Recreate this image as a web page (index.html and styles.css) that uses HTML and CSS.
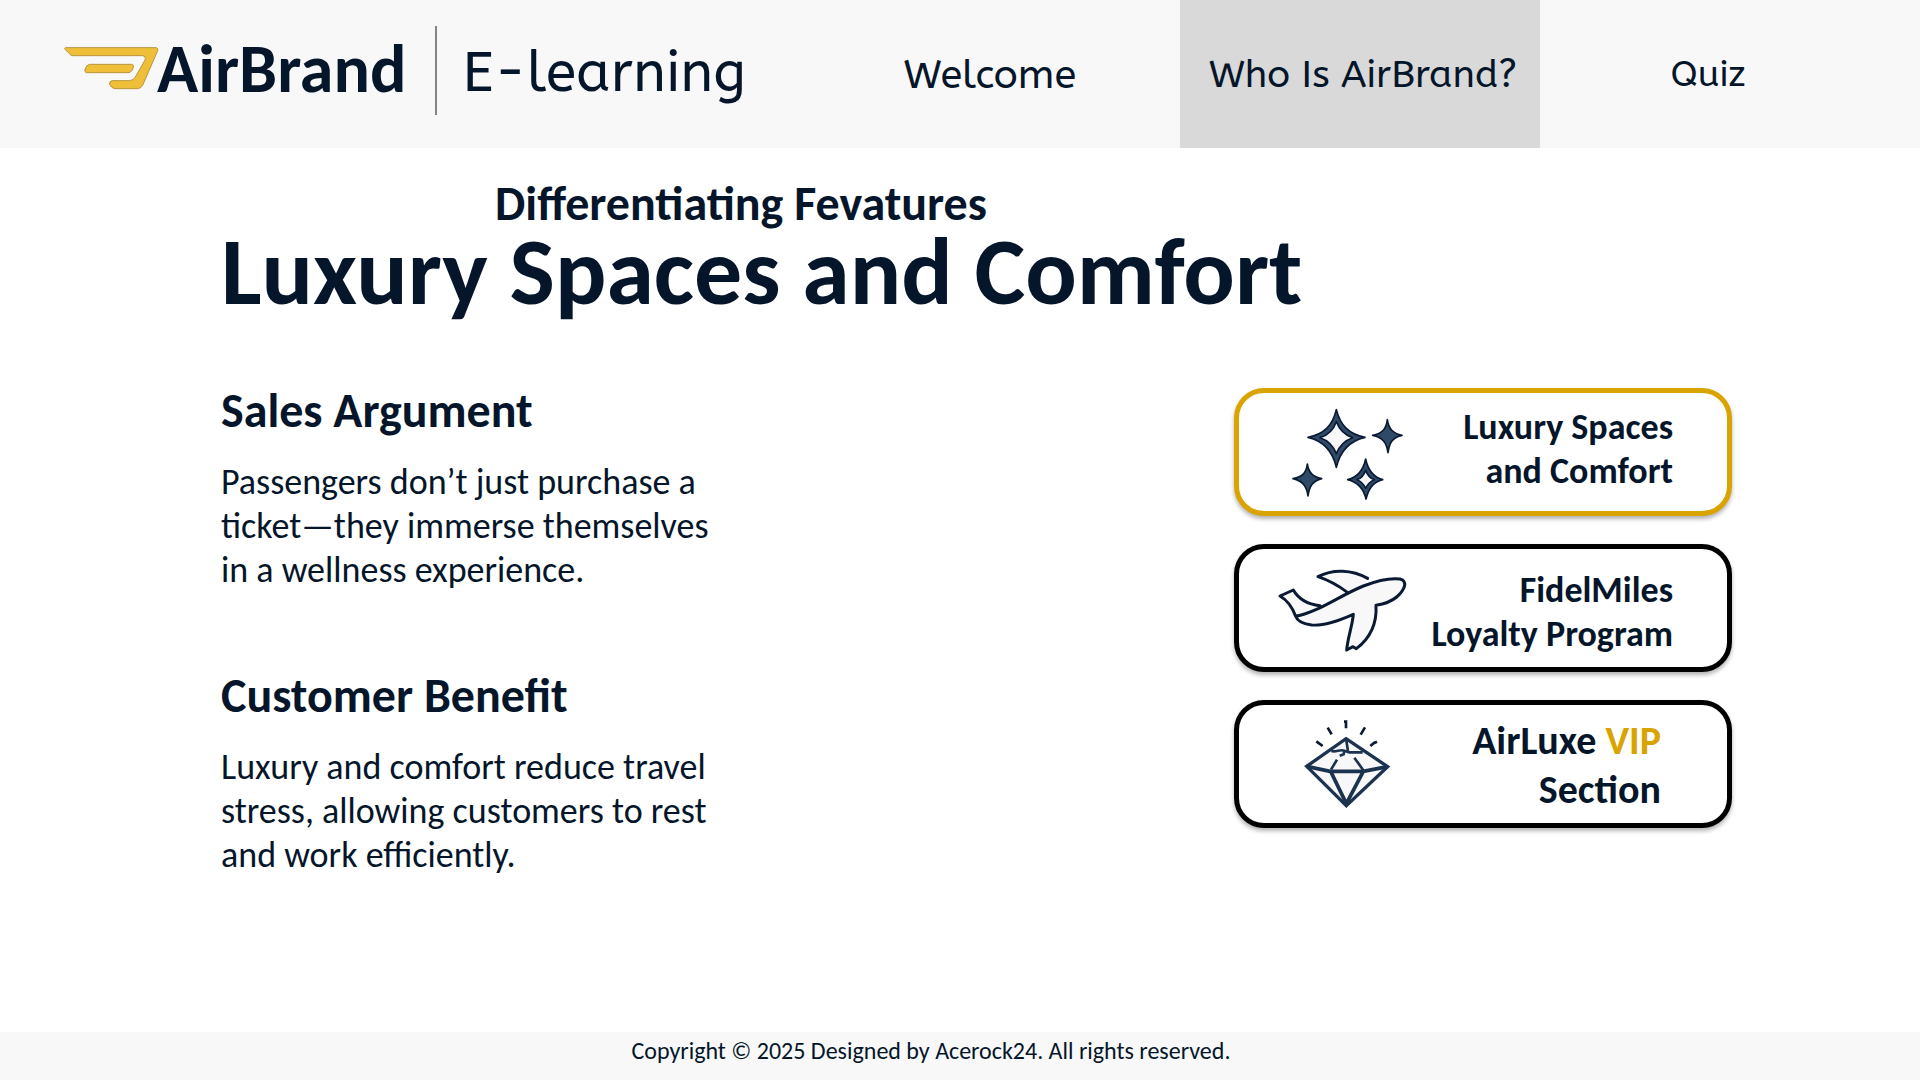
FILE: index.html
```html
<!DOCTYPE html>
<html lang="en">
<head>
<meta charset="utf-8">
<meta name="viewport" content="width=device-width, initial-scale=1">
<title>AirBrand E-learning</title>
<link rel="stylesheet" href="styles.css">
</head>
<body>
<header class="site-header">
  <div class="brand">
    <svg class="wing" viewBox="72 141 285 129" aria-hidden="true">
      <g fill="#efbf3a" stroke="#b8963c" stroke-width="3" stroke-linejoin="round">
        <path d="M76 143H350Q355 145 353 152L308 256Q303 265 293 266H225Q215 265 209 254Q207 243 216 242H268Q281 241 286 231L315 180Q319 168 307 167H97Q92 166 87 160L75 148Q73 144 76 143Z"/>
        <path d="M149 193H275Q282 194 280 202Q276 218 264 218H139Q133 216 135 209Q139 194 149 193Z"/>
      </g>
    </svg>
    <span class="brand-name">AirBrand</span>
    <span class="brand-section">E-learning</span>
  </div>
  <nav class="site-nav">
    <a href="#welcome">Welcome</a>
    <a href="#about" class="active" aria-current="page">Who Is AirBrand?</a>
    <a href="#quiz" class="compact">Quiz</a>
  </nav>
</header>

<main class="content">
  <div class="hero">
    <p class="eyebrow">Differentiating Fevatures</p>
    <h1>Luxury Spaces and Comfort</h1>
  </div>
  <div class="columns">
    <div class="copy">
      <section>
        <h2>Sales Argument</h2>
        <p>Passengers don’t just purchase a ticket—they immerse themselves in a wellness experience.</p>
      </section>
      <section>
        <h2>Customer Benefit</h2>
        <p>Luxury and comfort reduce travel stress, allowing customers to rest and work efficiently.</p>
      </section>
    </div>
    <div class="cards">
      <button type="button" class="card selected">
        <svg class="card-icon" viewBox="57 54 540 354" aria-hidden="true">
          <g fill="#2e4a66" stroke="#0b1a33" stroke-width="5" stroke-linejoin="round">
            <path d="M349 104C361 151 386 177 435 187C388 198 360 229 349 277C338 229 312 198 264 187C313 177 338 151 349 104Z"/>
            <path d="M502 134C506 162 519 175 546 181C518 187 508 203 504 233C500 203 488 187 458 181C487 175 499 162 502 134Z"/>
            <path d="M262 267C266 293 278 305 305 311C278 318 268 333 264 363C260 333 248 318 219 311C248 305 259 293 262 267Z"/>
            <path d="M437 252C444 286 459 306 488 314C458 322 446 341 438 372C431 341 414 322 383 314C415 306 430 286 437 252Z"/>
          </g>
          <g fill="#f8f8f8" stroke="#0b1a33" stroke-width="5" stroke-linejoin="round">
            <path d="M349 140C359 166 376 181 398 188C375 196 358 212 349 236C340 212 324 196 300 188C323 181 340 166 349 140Z"/>
            <path d="M437 286C443 302 450 310 463 314C450 319 443 327 437 340C431 327 424 319 411 314C424 310 431 302 437 286Z"/>
          </g>
        </svg>
        <span class="card-label">Luxury Spaces<br>and Comfort</span>
      </button>
      <button type="button" class="card">
        <svg class="card-icon" viewBox="57 39 540 354" aria-hidden="true">
          <path fill="#f8f8f8" d="M180 180L220 162Q243 204 303 210L383 170L294 122Q365 90 445 127L430 150Q500 123 545 129Q565 140 545 173Q520 203 468 208Q470 285 409 338L380 336L400 236Q260 295 227 241Q215 205 180 180Z"/>
          <g fill="none" stroke="#0b1a33" stroke-width="9" stroke-linejoin="round" stroke-linecap="round">
            <path d="M227 241C295 228 353 182 430 150C476 132 510 125 540 129C565 135 554 162 530 183C511 199 492 204 468 208C471 260 451 306 409 338L399 332L380 342C383 305 397 270 400 235C350 257 309 270 275 267C249 264 232 255 227 241C218 216 206 195 180 180L220 162C235 188 262 205 300 209"/>
            <path d="M382 169C354 148 327 133 294 122C340 98 396 101 443 127"/>
          </g>
        </svg>
        <span class="card-label low">FidelMiles<br>Loyalty Program</span>
      </button>
      <button type="button" class="card">
        <svg class="card-icon" viewBox="57 42 540 354" aria-hidden="true">
          <path fill="#f8f8f8" d="M378 142L504 227L379 346L258 226Z"/>
          <g fill="none" stroke="#1c3350" stroke-width="10">
            <path d="M378 143L503 227L379 344L260 226Z"/>
            <path d="M260 226L330 241H430L503 227M332 241L379 338L430 241" stroke-width="11"/>
            <path d="M333 236L351 206M430 238L403 200M334 180C350 185 357 174 373 179L388 184L428 184M378 143L384 180M359 194L371 190L373 179" stroke-width="8"/>
          </g>
          <g fill="none" stroke="#0b1a33" stroke-width="8">
            <path d="M289 151L308 165M323 110L335 130M372 92H378V112M435 109L422 131M471 152L462 156L451 165"/>
          </g>
        </svg>
        <span class="card-label large">AirLuxe <em>VIP</em><br>Section</span>
      </button>
    </div>
  </div>
</main>

<footer class="site-footer">Copyright © 2025 Designed by Acerock24. All rights reserved.</footer>
</body>
</html>
```
FILE: styles.css
```css
* {
  box-sizing: border-box;
}

body {
  margin: 0;
  min-height: 100vh;
  display: flex;
  flex-direction: column;
  background: #fff;
  color: #05162b;
  font-family: Carlito, Calibri, Lato, sans-serif;
}

h1,
h2,
p {
  margin: 0;
}

.site-header {
  display: flex;
  align-items: stretch;
  min-height: 148px;
  background: #f8f8f8;
}

.brand {
  display: flex;
  align-items: center;
  flex: 0 0 800px;
  padding-left: 64px;
}

.wing {
  width: 95px;
  height: 43px;
  margin: 0 -2px 12px 0;
}

.brand-name {
  margin-bottom: 10px;
  font-size: 68px;
  line-height: 88px;
  font-weight: 700;
}

.brand-section {
  margin: 0 0 7px 29px;
  padding: 5px 0 0 25px;
  border-left: 2px solid #848484;
  font-family: ABeeZee, "Noto Sans", sans-serif;
  font-size: 56px;
  line-height: 84px;
}

.site-nav {
  flex: 1;
  display: grid;
  grid-template-columns: 380fr 360fr 336fr;
  padding-right: 44px;
}

.site-nav a {
  display: flex;
  align-items: center;
  justify-content: center;
  color: inherit;
  font-family: ABeeZee, "Noto Sans", sans-serif;
  font-size: 40px;
  text-decoration: none;
  white-space: nowrap;
}

.site-nav .active {
  padding-left: 6px;
  background: #d9d9d9;
  font-size: 38px;
}

.site-nav .compact {
  font-size: 36px;
}

.content {
  flex: 1;
  padding: 32px 188px 59px 221px;
}

.eyebrow {
  max-width: 1040px;
  font-size: 48px;
  line-height: 48px;
  font-weight: 700;
  text-align: center;
}

h1 {
  font-size: 96px;
  line-height: 88px;
}

.columns {
  display: flex;
  justify-content: space-between;
  align-items: flex-start;
  gap: 40px;
  margin-top: 67px;
}

.copy {
  display: grid;
  gap: 76px;
  max-width: 520px;
}

h2 {
  margin-bottom: 21px;
  font-size: 48px;
  line-height: 56px;
}

.copy p {
  font-size: 36px;
  line-height: 44px;
}

.cards {
  display: grid;
  gap: 28px;
  flex: 0 0 498px;
  margin-top: 5px;
}

.card {
  display: flex;
  align-items: center;
  justify-content: space-between;
  min-height: 128px;
  padding: 0 54px 0 0;
  border: 5px solid #000;
  border-radius: 30px;
  background: #fff;
  box-shadow: 0 3px 4px rgba(0, 0, 0, 0.3);
  color: inherit;
  font-family: inherit;
  font-size: 36px;
  font-weight: 700;
  line-height: 44px;
  text-align: right;
}

.card.selected {
  border-color: #d9a300;
}

.card-icon {
  flex: none;
  width: 180px;
  height: 118px;
}

.card-label {
  padding-bottom: 6px;
}

.card-label.low {
  padding: 8px 0 0;
}

.card-label.large {
  padding: 2px 12px 0 0;
  font-size: 40px;
  line-height: 49px;
}

.card-label em {
  color: #d9a300;
  font-style: normal;
}

.site-footer {
  min-height: 48px;
  padding: 4px 58px 14px 0;
  background: #f8f8f8;
  font-size: 24px;
  line-height: 30px;
  text-align: center;
}
```
